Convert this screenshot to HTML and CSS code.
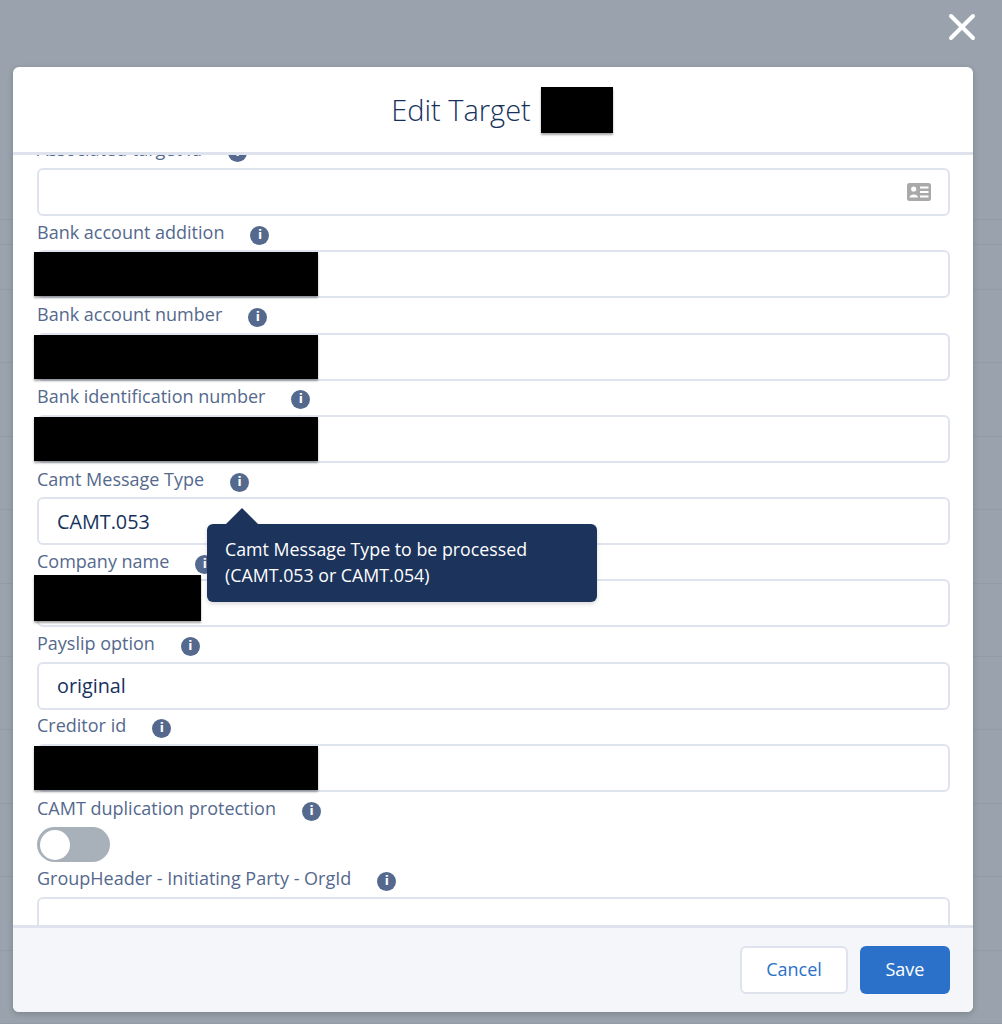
FILE: index.html
```html
<!DOCTYPE html>
<html lang="en">
<head>
    <meta charset="UTF-8">
    <meta name="viewport" content="width=device-width, initial-scale=1.0">
    <title>Edit Target</title>
    <link rel="stylesheet" href="styles.css">
</head>
<body>
    <div class="backdrop">
        <button class="close-button" aria-label="Close">
            <svg viewBox="0 0 28 28" width="28" height="28"><path d="M3 3 L25 25 M25 3 L3 25" stroke="#fff" stroke-width="4" stroke-linecap="round" fill="none"/></svg>
        </button>
        <div class="modal">
            <header class="modal-header">
                <h2>Edit Target</h2>
                <span class="redact redact-title"></span>
            </header>
            <div class="modal-body">
                <div class="field field-first">
                    <label>Associated target id<span class="info">i</span></label>
                    <div class="input">
                        <svg class="card-icon" viewBox="0 0 24 18" width="24" height="18">
                            <rect width="24" height="18" rx="2.5" fill="#a9a9a9"/>
                            <circle cx="6.7" cy="6" r="2.6" fill="#fff"/>
                            <path d="M2.5 14.5 C2.5 10.5 11 10.5 11 14.5 Z" fill="#fff"/>
                            <path d="M13 4.5 H21.5 M13 9 H21.5 M13 13.5 H21.5" stroke="#fff" stroke-width="1.8"/>
                        </svg>
                    </div>
                </div>
                <div class="field">
                    <label>Bank account addition<span class="info">i</span></label>
                    <div class="input"><span class="redact redact-value"></span></div>
                </div>
                <div class="field">
                    <label>Bank account number<span class="info">i</span></label>
                    <div class="input"><span class="redact redact-value"></span></div>
                </div>
                <div class="field">
                    <label>Bank identification number<span class="info">i</span></label>
                    <div class="input"><span class="redact redact-value"></span></div>
                </div>
                <div class="field">
                    <label>Camt Message Type<span class="info">i</span></label>
                    <div class="input">CAMT.053</div>
                </div>
                <div class="field">
                    <label>Company name<span class="info">i</span></label>
                    <div class="input"><span class="redact redact-short"></span></div>
                </div>
                <div class="field">
                    <label>Payslip option<span class="info">i</span></label>
                    <div class="input">original</div>
                </div>
                <div class="field">
                    <label>Creditor id<span class="info">i</span></label>
                    <div class="input"><span class="redact redact-value"></span></div>
                </div>
                <div class="field field-toggle">
                    <label>CAMT duplication protection<span class="info">i</span></label>
                    <div class="toggle"><span class="knob"></span></div>
                </div>
                <div class="field">
                    <label>GroupHeader - Initiating Party - OrgId<span class="info">i</span></label>
                    <div class="input"></div>
                </div>
            </div>
            <footer class="modal-footer">
                <button class="btn btn-neutral">Cancel</button>
                <button class="btn btn-brand">Save</button>
            </footer>
            <div class="tooltip">Camt Message Type to be processed<br>(CAMT.053 or CAMT.054)</div>
        </div>
    </div>
</body>
</html>
```

FILE: styles.css
```css
* {
    box-sizing: border-box;
}
html, body {
    margin: 0;
    height: 100%;
}
body {
    font-family: 'Open Sans', 'Noto Sans', sans-serif;
    color: #16325c;
    overflow: hidden;
}
/* faint table rows of the page behind the modal */
.backdrop {
    height: 1024px;
    padding: 67px 29px 12px 13px;
    background-color: #9aa3ad;
    background-image:
        linear-gradient(#939ca6, #939ca6),
        linear-gradient(#939ca6, #939ca6),
        repeating-linear-gradient(to bottom, #939ca6 0, #939ca6 1px, transparent 1px, transparent 73.4px);
    background-repeat: no-repeat;
    background-size: 100% 1px, 100% 1px, 100% 735px;
    background-position: 0 219px, 0 244px, 0 289px;
    position: relative;
}
.close-button {
    position: absolute;
    top: 13px;
    right: 26px;
    padding: 0;
    border: none;
    background: none;
    line-height: 0;
}
.modal {
    position: relative;
    display: flex;
    flex-direction: column;
    height: 945px;
    background: #fff;
    border-radius: 6px;
    box-shadow: 0 2px 6px rgba(0, 0, 0, 0.2);
}
.modal-header {
    display: flex;
    justify-content: center;
    align-items: center;
    gap: 10px;
    height: 88px;
    flex-shrink: 0;
    padding-left: 18px;
    border-bottom: 3px solid #dfe3ed;
}
.modal-header h2 {
    margin: 0;
    font-size: 29px;
    font-weight: 300;
    color: #16325c;
}
.redact {
    display: block;
    background: #000;
    box-shadow: 0 2px 2px rgba(0, 0, 0, 0.35);
}
.redact-title {
    width: 72px;
    height: 46px;
}
.modal-body {
    flex: 1;
    overflow: hidden;
    padding: 0 23px 0 24px;
}
.field-first {
    margin-top: -21.3px;
}
.field label {
    display: flex;
    align-items: center;
    height: 34.3px;
    font-size: 18px;
    color: #54698d;
    white-space: nowrap;
    padding-bottom: 3px;
}
.info {
    display: inline-block;
    width: 19px;
    height: 19px;
    margin: 7px 0 0 26px;
    border-radius: 50%;
    background: #54698d;
    color: #fff;
    font-family: 'DejaVu Sans', sans-serif;
    font-size: 12px;
    font-weight: 700;
    line-height: 19px;
    text-align: center;
}
.input {
    position: relative;
    display: flex;
    align-items: center;
    height: 48px;
    padding: 0 18px;
    background: #fff;
    border: 2px solid #dfe3ed;
    border-radius: 6px;
    font-size: 19.8px;
    color: #16325c;
}
.card-icon {
    position: absolute;
    top: 13px;
    right: 17px;
}
.redact-value,
.redact-short {
    position: absolute;
    left: -5px;
    top: 0;
    height: 44px;
}
.redact-value {
    width: 284px;
}
.redact-short {
    top: -6px;
    width: 167px;
    height: 46px;
}
.toggle {
    width: 73px;
    height: 35px;
    padding: 2.5px;
    border-radius: 18px;
    background: #a8b0ba;
}
.knob {
    display: block;
    width: 30px;
    height: 30px;
    border-radius: 50%;
    background: #fff;
}
.field-toggle {
    height: 70.3px;
}
.field-toggle label {
    height: 35px;
}
.modal-footer {
    display: flex;
    justify-content: flex-end;
    gap: 12px;
    height: 87px;
    flex-shrink: 0;
    padding: 18px 23px 0 0;
    background: #f4f6f9;
    border-top: 3px solid #dfe3ed;
    border-radius: 0 0 6px 6px;
}
.btn {
    height: 48px;
    padding: 0 0 3px;
    border-radius: 6px;
    font-family: inherit;
    font-size: 18px;
}
.btn-neutral {
    width: 108px;
    background: #fff;
    border: 2px solid #dfe3ed;
    color: #2b71c9;
}
.btn-brand {
    width: 90px;
    background: #2b71c9;
    border: none;
    color: #fff;
}
.tooltip {
    position: absolute;
    left: 194px;
    top: 457px;
    width: 390px;
    height: 78px;
    padding: 12px 18px;
    background: #1c335c;
    border-radius: 6px;
    color: #fff;
    font-size: 17.8px;
    line-height: 26px;
    box-shadow: 0 2px 4px rgba(0, 0, 0, 0.15);
}
.tooltip::before {
    content: "";
    position: absolute;
    left: 18px;
    top: -16px;
    border-left: 17px solid transparent;
    border-right: 17px solid transparent;
    border-bottom: 17px solid #1c335c;
}
```
